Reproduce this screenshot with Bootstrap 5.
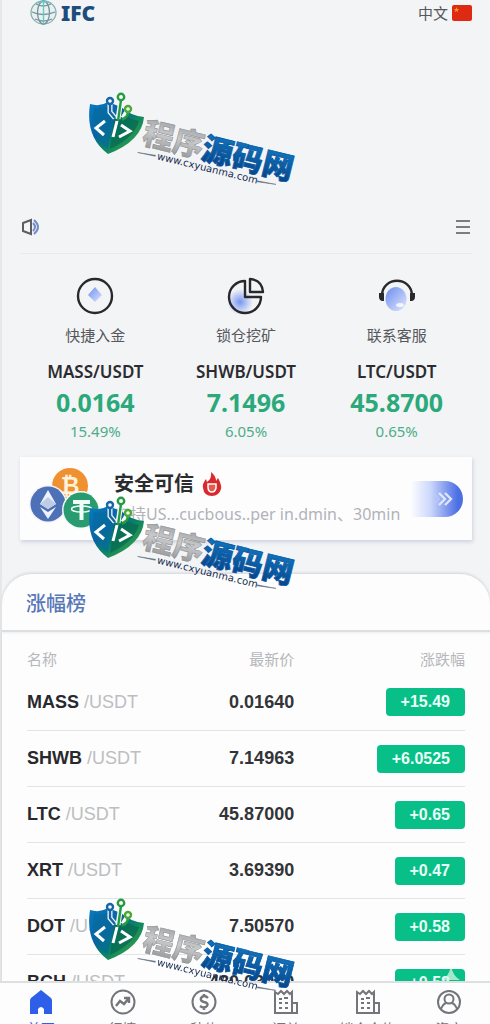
<!DOCTYPE html>
<html lang="zh-CN">
<head>
<meta charset="utf-8">
<meta name="viewport" content="width=device-width, initial-scale=1">
<title>IFC</title>
<link href="https://cdn.jsdelivr.net/npm/bootstrap@5.3.0/dist/css/bootstrap.min.css" rel="stylesheet">
<style>
body{font-family:"Noto Sans","Noto Sans CJK SC",sans-serif;background:#f3f4f6;color:#2b2c30;overflow-x:hidden}
.page{min-height:100vh;border-left:2px solid #e6e7e9}
.topbar{height:25px;padding:0 18px 0 28px}
.brand-name{font:900 21px/24px "Noto Sans",sans-serif;color:#1d4d7a}
.plain{background:none;border:0;padding:0;color:#55575b}
.lang{font-size:15px;line-height:24px}
.hero{height:175px}
.inset{margin:0 18px}
.notice{height:54px;border-bottom:1px solid #e9eaec;padding:0 1px}
.quick{padding-top:23px}
.quick a{color:#55575b;font-size:15px;line-height:20px;text-decoration:none}
.quick svg{margin-bottom:10px}
.pair{font-weight:600;font-size:17px;line-height:22px;margin-top:16px}
.rate{font-weight:700;font-size:25px;line-height:38px;color:#2ba97b}
.pct{font-size:15px;line-height:20px;color:#4bae88}
.promo{height:83px;margin-top:16px;background:#fdfdfe;box-shadow:1px 2px 4px #cfd1dc;color:inherit}
.coins{width:94px}
.promo-title{font-weight:700;font-size:20px;line-height:28px}
.promo-note{font-size:16px;line-height:28px;padding-top:2px;color:#b1b3b9}
.go{width:52px;height:36px;margin-right:9px;border-radius:0 18px 18px 0;background:linear-gradient(90deg,#fdfdfe,#cbd6fb 38%,#4c6fe4 90%)}
.board{margin-top:34px;background:#fdfdfd;border-radius:30px 30px 0 0;box-shadow:0 -1px 3px #cfd1d8}
.board h2{height:58px;margin:0;padding-left:24px;font-size:20px;line-height:60px;font-weight:500;color:#5877b8;border-bottom:2px solid #dcdfe1;box-shadow:0 1px 2px #ececee}
.quotes{margin:0 25px}
.quotes table{table-layout:fixed;width:100%;font:18px/28px "Liberation Sans",sans-serif}
.quotes th,.quotes td{padding:0}
.quotes th{font:400 15px/20px "Noto Sans CJK SC",sans-serif;color:#b5b7bb;height:42px;padding-top:12px}
.quotes td{height:56px;border-bottom:1px solid #e3e4e6}
.quotes td:nth-child(2){font-weight:700;color:#333438}
.quotes b{color:#29292d}
.quotes i{font-style:normal;color:#bcbec1}
.gain{display:inline-block;font-weight:700;font-size:16px;line-height:28px;padding:0 15px;border-radius:4px;background:#08c087;color:#e9fff7}
.tabs{height:43px;padding-top:6px;background:#fdfdfd;border-top:2px solid #dedfe1;overflow:hidden}
.tabs a{color:#73757b;font-size:14px;line-height:20px;text-decoration:none;padding:0}
.tabs a.on{color:#2d5fe8}
.tabs svg{margin-bottom:4px}
.stamp{position:absolute;left:84px;pointer-events:none;z-index:1040;overflow:visible}
.stamp-a{top:90px}.stamp-b{top:494px}.stamp-c{top:896px}
.stamp g{font-family:"Noto Sans CJK SC",sans-serif;font-weight:900}
.stamp .s1{font-size:31px;fill:url(#silver);stroke:#898b8d;stroke-width:.5}
.stamp .s2{font-size:31px;fill:url(#azure);stroke:#085aa5;stroke-width:.8}
.stamp .s3{font:400 10px "DejaVu Sans",sans-serif;fill:#142c50}
.spark{position:absolute;right:30px;top:966px;z-index:1035}
</style>
</head>
<body>
<svg width="0" height="0" class="position-absolute" aria-hidden="true">
 <defs>
  <linearGradient id="shield" x1="0" y1="0" x2="1" y2="1"><stop offset="0" stop-color="#077bc0"/><stop offset=".38" stop-color="#0963a3"/><stop offset=".55" stop-color="#08806a"/><stop offset="1" stop-color="#49b035"/></linearGradient>
  <linearGradient id="silver" x1="0" y1="0" x2="0" y2="1"><stop offset="0" stop-color="#8d8f91"/><stop offset=".5" stop-color="#c9cacb"/><stop offset="1" stop-color="#8a8c8e"/></linearGradient>
  <linearGradient id="azure" x1="0" y1="0" x2="0" y2="1"><stop offset="0" stop-color="#1482cb"/><stop offset="1" stop-color="#063c80"/></linearGradient>
  <linearGradient id="haze" x1="0" y1="0" x2="1" y2="1"><stop offset="0" stop-color="#6b8df0"/><stop offset="1" stop-color="#dfe6fc"/></linearGradient>
  <radialGradient id="glow"><stop offset="0" stop-color="#7796f1"/><stop offset="1" stop-color="#7796f1" stop-opacity="0"/></radialGradient>
 </defs>
 <symbol id="badge-mark" viewBox="0 0 216 108">
  <path d="M4 14Q14 17 22 12L35 17Q45 26 58 27Q56 51 22 64Q-1 47 4 14Z" fill="url(#shield)"/>
  <path d="M8 18Q15 20 22 17L27 30L22 59Q4 46 8 18Z" fill="#056b9d" opacity=".7"/>
  <path d="M34 21Q42 29 53 31Q48 48 24 59L28 30Z" fill="#07694e" opacity=".7"/>
  <g fill="none" stroke="#f5f8f7" stroke-width="5"><path d="M24 12V22L29 28M35 9L32 29M42 20L37 28"/></g>
  <g fill="none" stroke-width="2.400"><path d="M24 14V22L29 28" stroke="#1465a9"/><path d="M35 10L32 31M42 22L41 26L36 30" stroke="#249b42"/><g fill="#f8faf9"><circle cx="24" cy="11" r="3" stroke="#1465a9"/><circle cx="35" cy="7" r="3.200" stroke="#249b42"/><circle cx="42" cy="19" r="3" stroke="#4aaa35"/></g></g>
  <path d="M19 31L10 38L18 45M31 31L27 47M35 35L44 41L33 47" fill="none" stroke="#fff" stroke-width="3"/>
  <path transform="translate(55 53) rotate(13.800)" d="M-1 10L17 8.500V9.500ZM122 9L141 8L122 10Z" fill="#566577" stroke="#687583" stroke-width=".5"/>
 </symbol>
 <symbol id="news" viewBox="0 0 26 26">
  <g fill="none" stroke="currentColor" stroke-width="2"><path d="M19 24H2V3L5 5L8 2L11 5L14 2L17 5L19 3V24H24V14H19"/><path d="M6 10H9M11 9H15M6 14H9M12 14H15M6 19H9M12 19H15"/></g>
 </symbol>
</svg>

<div class="page d-flex flex-column position-relative">
 <header class="topbar d-flex justify-content-between align-items-center">
  <div class="d-flex align-items-center gap-1">
   <svg width="27" height="25" viewBox="0 0 27 25" fill="none" stroke="#78929b" stroke-width="1.300"><ellipse cx="13.500" cy="12.500" rx="12.500" ry="11.500" fill="#e6f1f1" stroke="#8daeb1"/><path d="M6 4Q13 8 21 4M2 12Q13 17 25 12M5 19Q13 23 22 19"/><ellipse cx="13.500" cy="12.500" rx="6" ry="11.500"/><path d="M13.500 1V24M7 3Q14 0 20 3" stroke="#69c7c1"/></svg>
   <span class="brand-name">IFC</span>
  </div>
  <button class="plain lang d-flex align-items-center gap-1" type="button">中文
   <svg width="20" height="16" viewBox="0 0 20 16"><rect width="20" height="16" rx="2" fill="#df2a13"/><path d="M4.500 2L5.200 4H7.300L5.600 5.200L6.200 7.200L4.500 6L2.800 7.200L3.400 5.200L1.700 4H3.800Z" fill="#f59a22"/></svg>
  </button>
 </header>
 <div class="hero"></div>
 <div class="inset notice d-flex justify-content-between align-items-center">
  <svg width="20" height="18" viewBox="0 0 20 18" fill="none" stroke-width="2"><path d="M2 5L10 2V16L2 13Z" stroke="#5c5d62"/><path d="M12 5Q16 9 12 13M13 2Q21 9 13 16" stroke="#718cc9"/></svg>
  <button class="plain d-flex" type="button" aria-label="菜单"><svg width="16" height="16" viewBox="0 0 16 16" stroke="#7c7d81" stroke-width="2"><path d="M1 2H15M1 8H15M1 14H15"/></svg></button>
 </div>

 <section class="inset quick row g-0 text-center">
  <div class="col"><a href="#" class="d-flex flex-column align-items-center">
   <svg width="38" height="38" viewBox="0 0 38 38"><circle cx="19" cy="19" r="17" fill="none" stroke="#29292d" stroke-width="2.400"/><path d="M19 10L26 18L19 25L12 18Z" fill="url(#haze)"/></svg>快捷入金</a>
   <div class="pair">MASS/USDT</div><div class="rate">0.0164</div><div class="pct">15.49%</div></div>
  <div class="col"><a href="#" class="d-flex flex-column align-items-center">
   <svg width="38" height="38" viewBox="0 0 38 38"><circle cx="13" cy="25" r="13" fill="url(#glow)"/><g fill="none" stroke="#29292d" stroke-width="2.400" stroke-linejoin="round"><path d="M18 4A16 16 0 1 0 34 20H18Z"/><path d="M23 2V15H36Q35 3 23 2Z"/></g></svg>锁仓挖矿</a>
   <div class="pair">SHWB/USDT</div><div class="rate">7.1496</div><div class="pct">6.05%</div></div>
  <div class="col"><a href="#" class="d-flex flex-column align-items-center">
   <svg width="38" height="38" viewBox="0 0 38 38"><ellipse cx="18" cy="22" rx="10.500" ry="12" fill="url(#haze)"/><ellipse cx="22" cy="28" rx="4" ry="2" fill="#fff" opacity=".8"/><path d="M4 18C5 -1 33 -1 34 18" fill="none" stroke="#29292d" stroke-width="2.400"/><path d="M1 16H6V24H4Q1 23 1 20ZM32 16H37V20Q37 23 34 24H32Z" fill="#29292d"/></svg>联系客服</a>
   <div class="pair">LTC/USDT</div><div class="rate">45.8700</div><div class="pct">0.65%</div></div>
 </section>

 <a href="#" class="inset promo d-flex align-items-center text-decoration-none">
  <div class="coins flex-shrink-0"><svg class="ms-2" width="78" height="64" viewBox="0 0 78 64">
   <circle cx="42" cy="19" r="18" fill="#ef9130"/><text x="42" y="27" text-anchor="middle" font-family="DejaVu Sans,sans-serif" font-weight="700" font-size="23" fill="#fff2dc">₿</text>
   <circle cx="20" cy="37" r="19" fill="#f4f6fb"/><circle cx="20" cy="37" r="17.500" fill="#4e70b7"/><path d="M20 23L28 37L20 42L12 37ZM12 40L20 45L28 40L20 52Z" fill="#eef3fb"/><path d="M20 30L28 37L20 42L12 37Z" fill="#bfcce8"/>
   <circle cx="53" cy="43" r="19" fill="#f4fbf8"/><circle cx="53" cy="43" r="17.500" fill="#289b70"/><path d="M45 35H62M53.500 35V53" stroke="#effff8" stroke-width="4"/><ellipse cx="53.500" cy="42" rx="10" ry="3" fill="none" stroke="#effff8" stroke-width="1.500"/></svg></div>
  <div class="flex-grow-1 text-nowrap">
   <div class="promo-title d-flex align-items-center gap-2">安全可信
    <svg width="20" height="24" viewBox="0 0 20 24"><path d="M9 0Q14 4 14 9L16 6Q20 13 19 17Q17 24 10 24Q2 24 1 16Q0 12 4 7L5 10Q10 7 9 0Z" fill="#d9292c"/><path d="M6 12H14V16Q13 20 10 20Q6 20 6 15Z" fill="#e8584f" stroke="#fff" stroke-width="1.500"/></svg></div>
   <div class="promo-note">支持US...cucbous..per in.dmin、30min</div>
  </div>
  <span class="go flex-shrink-0 d-flex align-items-center justify-content-end pe-2"><svg width="24" height="18" viewBox="0 0 24 18" fill="none" stroke-width="2.300"><path d="M2 3L8 9L2 15" stroke="#bccbfa" opacity=".6"/><path d="M8 3L14 9L8 15M14 3L20 9L14 15" stroke="#dfe8ff"/></svg></span>
 </a>

 <section class="board flex-grow-1">
  <h2>涨幅榜</h2>
  <div class="quotes">
   <table>
    <colgroup><col style="width:35%"><col style="width:26%"><col style="width:39%"></colgroup>
    <thead><tr><th>名称</th><th class="text-end">最新价</th><th class="text-end">涨跌幅</th></tr></thead>
    <tbody>
     <tr><td><b>MASS</b> <i>/USDT</i></td><td class="text-end">0.01640</td><td class="text-end"><span class="gain">+15.49</span></td></tr>
     <tr><td><b>SHWB</b> <i>/USDT</i></td><td class="text-end">7.14963</td><td class="text-end"><span class="gain">+6.0525</span></td></tr>
     <tr><td><b>LTC</b> <i>/USDT</i></td><td class="text-end">45.87000</td><td class="text-end"><span class="gain">+0.65</span></td></tr>
     <tr><td><b>XRT</b> <i>/USDT</i></td><td class="text-end">3.69390</td><td class="text-end"><span class="gain">+0.47</span></td></tr>
     <tr><td><b>DOT</b> <i>/USDT</i></td><td class="text-end">7.50570</td><td class="text-end"><span class="gain">+0.58</span></td></tr>
     <tr><td><b>BCH</b> <i>/USDT</i></td><td class="text-end">480.03000</td><td class="text-end"><span class="gain">+0.58</span></td></tr>
    </tbody>
   </table>
  </div>
 </section>

 <svg class="spark" width="18" height="14" viewBox="0 0 18 14"><path d="M9 0Q11 10 18 14H0Q7 10 9 0Z" fill="#d6f5ea" opacity=".75"/></svg>
 <svg class="stamp stamp-a" width="216" height="108"><use href="#badge-mark"/><g transform="translate(55 53) rotate(13.800)"><text class="s1">程序</text><text class="s2" x="61" y="1">源码网</text><text class="s3" x="19" y="12">www.cxyuanma.com</text></g></svg>
 <svg class="stamp stamp-b" width="216" height="108"><use href="#badge-mark"/><g transform="translate(55 53) rotate(13.800)"><text class="s1">程序</text><text class="s2" x="61" y="1">源码网</text><text class="s3" x="19" y="12">www.cxyuanma.com</text></g></svg>
 <svg class="stamp stamp-c" width="216" height="108"><use href="#badge-mark"/><g transform="translate(55 53) rotate(13.800)"><text class="s1">程序</text><text class="s2" x="61" y="1">源码网</text><text class="s3" x="19" y="12">www.cxyuanma.com</text></g></svg>
</div>

<nav class="tabs fixed-bottom row g-0 text-center">
 <a href="#" class="col on d-flex flex-column align-items-center"><svg width="26" height="26" viewBox="0 0 26 26" fill="currentColor"><path d="M13 1L23 9Q24 10 24 12V25H16V20Q13 16 10 20V25H2V12Q2 10 3 9Z"/></svg>首页</a>
 <a href="#" class="col d-flex flex-column align-items-center"><svg width="26" height="26" viewBox="0 0 26 26" fill="none" stroke="currentColor" stroke-width="2"><circle cx="13" cy="13" r="11.500"/><path d="M6 17L10 12L14 15L19 9M14 9H19V14" stroke-width="2.400"/></svg>行情</a>
 <a href="#" class="col d-flex flex-column align-items-center"><svg width="26" height="26" viewBox="0 0 26 26" fill="none" stroke="currentColor" stroke-width="2"><circle cx="13" cy="13" r="11.500"/><path d="M17 9Q13 5 10 9Q9 12 13 13Q18 14 16 17Q13 20 9 17M13 5V8M13 18V21" stroke-width="2.400"/></svg>秒约</a>
 <a href="#" class="col d-flex flex-column align-items-center"><svg width="26" height="26"><use href="#news"/></svg>订单</a>
 <a href="#" class="col d-flex flex-column align-items-center"><svg width="26" height="26"><use href="#news"/></svg>锁仓合约</a>
 <a href="#" class="col d-flex flex-column align-items-center"><svg width="26" height="26" viewBox="0 0 26 26" fill="none" stroke="currentColor" stroke-width="2"><circle cx="13" cy="13" r="11"/><circle cx="13" cy="10" r="4.500"/><path d="M5 20Q7 15 10 14M21 20Q19 15 16 14"/></svg>资产</a>
</nav>
<script src="https://cdn.jsdelivr.net/npm/bootstrap@5.3.0/dist/js/bootstrap.bundle.min.js"></script>
</body>
</html>
